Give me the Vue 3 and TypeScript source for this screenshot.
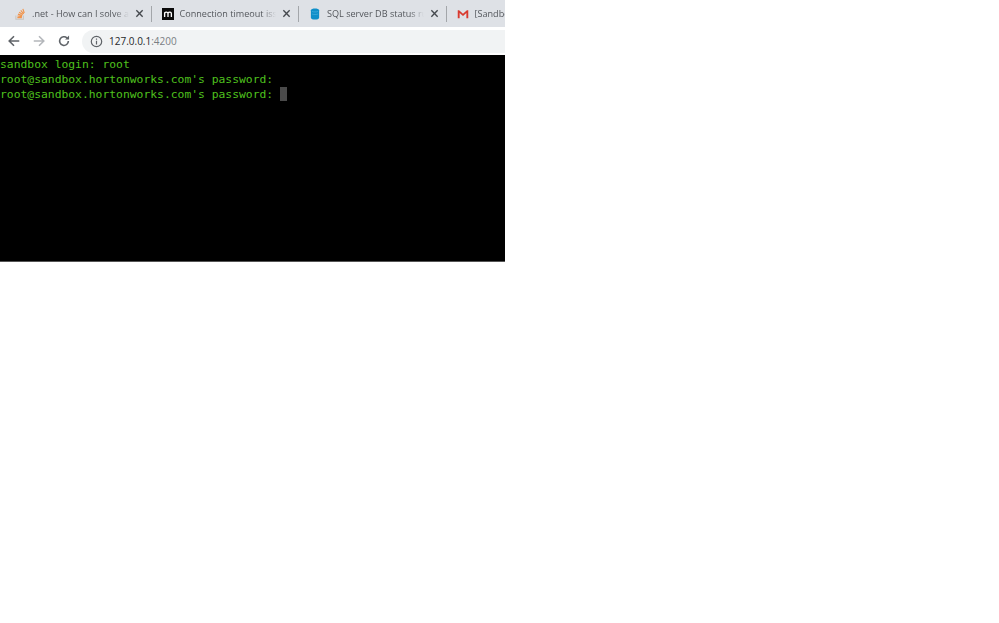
<script setup lang="ts">
interface Tab {
  title: string
  icon: string
}

const tabs: Tab[] = [
  { title: '.net - How can I solve a problem', icon: 'so' },
  { title: 'Connection timeout issue', icon: 'm' },
  { title: 'SQL server DB status running', icon: 'db' },
  { title: '[Sandbox] Gmail', icon: 'gm' },
]

const lines: string[] = [
  'sandbox login: root',
  "root@sandbox.hortonworks.com's password:",
]
</script>

<template>
  <div class="window">
    <div class="tabstrip">
      <div v-for="tab in tabs" :key="tab.icon" class="tab">
        <svg v-if="tab.icon === 'so'" class="favicon" viewBox="0 0 16 16">
          <path d="M2.500 10v5h10v-5" fill="none" stroke="#c9c4bd" stroke-width="1.400" />
          <path d="M4.500 12.800h6M4.600 10.600l6 .9M5.300 8.200l5.700 2M6.800 5.600l5 3.100M9 3.300l3.900 4.500M11.800 1.200l1.900 5.400" fill="none" stroke="#f1934a" stroke-width="1.500" />
        </svg>
        <svg v-else-if="tab.icon === 'm'" class="favicon" viewBox="0 0 16 16">
          <rect width="16" height="16" fill="#0b0b0b" />
          <path d="M3.500 12V5.500M3.500 7c1-2 4-2 4.500 0V12M8 7c1-2 4.500-2 4.500 .5V12" fill="none" stroke="#fff" stroke-width="1.800" />
        </svg>
        <svg v-else-if="tab.icon === 'db'" class="favicon" viewBox="0 0 16 16">
          <path d="M2.500 3c0-3.300 11-3.300 11 0v10c0 3.300-11 3.300-11 0z" fill="#0f8fc9" />
          <path d="M4 4.500c2 1 6 1 8 0M4 8c2 1 6 1 8 0" fill="none" stroke="#59b8e2" stroke-width=".7" />
        </svg>
        <svg v-else class="favicon" viewBox="0 0 16 16">
          <path d="M1 13.500V3h1.800L8 7.500 13.200 3H15v10.500h-2.500V6.800L8 10.500 3.500 6.800v6.700z" fill="#d93a2f" />
        </svg>
        <span class="title">{{ tab.title }}</span>
        <svg class="close" viewBox="0 0 10 10">
          <path d="M1.500 1.500l7 7M8.500 1.500l-7 7" stroke="#45494e" stroke-width="1.500" fill="none" />
        </svg>
      </div>
    </div>

    <div class="toolbar">
      <svg class="nav" viewBox="0 0 16 16">
        <path d="M14 8H3M8 2.500L2.500 8 8 13.500" fill="none" stroke="#5f6368" stroke-width="1.800" />
      </svg>
      <svg class="nav" viewBox="0 0 16 16">
        <path d="M2 8h11M8 2.500L13.500 8 8 13.500" fill="none" stroke="#b4b7bb" stroke-width="1.800" />
      </svg>
      <svg class="nav" viewBox="0 0 16 16">
        <path d="M13 8a5 5 0 1 1-1.500-3.500" fill="none" stroke="#5f6368" stroke-width="1.800" />
        <path d="M13.800 1.800v4.600H9.200z" fill="#5f6368" />
      </svg>
      <div class="omnibox">
        <svg class="info" viewBox="0 0 14 14">
          <circle cx="7" cy="7" r="5.600" fill="none" stroke="#5f6368" stroke-width="1.300" />
          <path d="M7 6.200v4M7 3.700v1.300" stroke="#5f6368" stroke-width="1.300" fill="none" />
        </svg>
        <span class="url">127.0.0.1<span class="port">:4200</span></span>
      </div>
    </div>

    <div class="terminal">
      <div v-for="(line, i) in lines" :key="i" class="line">{{ line }}</div>
      <div class="line">{{ lines[1] }} <span class="cursor"></span></div>
    </div>
  </div>
</template>

<style>
html,
body {
  background: #fff;
}
</style>

<style scoped>
.window {
  width: 505px;
  overflow: hidden;
  display: flex;
  flex-direction: column;
}

.tabstrip {
  height: 27px;
  background: #dee1e6;
  display: flex;
  padding-left: 4px;
  flex-shrink: 0;
  overflow: hidden;
}

.tab {
  flex: 0 0 147.5px;
  min-width: 0;
  height: 27px;
  box-sizing: border-box;
  display: flex;
  align-items: center;
  padding: 0 8px 0 10px;
  position: relative;
}

.tab::after {
  content: "";
  position: absolute;
  right: 0;
  top: 6px;
  height: 16px;
  width: 1px;
  background: #a3a6aa;
}

.favicon {
  width: 12px;
  height: 12px;
  flex-shrink: 0;
  margin-right: 6px;
}

.title {
  flex: 1;
  min-width: 0;
  white-space: nowrap;
  overflow: hidden;
  font: 9.1px/14px "Open Sans", sans-serif;
  color: #54575c;
  -webkit-mask-image: linear-gradient(90deg, #000 85%, transparent);
  mask-image: linear-gradient(90deg, #000 85%, transparent);
}

.close {
  width: 9px;
  height: 9px;
  flex-shrink: 0;
  margin-left: 6px;
}

.toolbar {
  height: 28px;
  background: #fff;
  display: flex;
  align-items: center;
  gap: 11px;
  padding: 0 0 0 7px;
  box-sizing: border-box;
}

.nav {
  width: 14px;
  height: 14px;
  flex-shrink: 0;
}

.omnibox {
  flex: 1;
  height: 23px;
  background: #f1f3f4;
  border-radius: 12px 0 0 12px;
  display: flex;
  align-items: center;
  padding-left: 8px;
  gap: 6px;
}

.info {
  width: 13px;
  height: 13px;
  flex-shrink: 0;
}

.url {
  font: 10px/14px "Open Sans", sans-serif;
  color: #26282b;
}

.port {
  color: #7a7e83;
}

.terminal {
  height: 207px;
  background: #000;
  box-sizing: border-box;
  padding-top: 2px;
  border-bottom: 1px solid #555;
  font: 11.35px/15px "DejaVu Sans Mono", monospace;
  color: #4fc01e;
  white-space: pre;
}

.line {
  height: 15px;
}

.cursor {
  display: inline-block;
  width: 7px;
  height: 14px;
  background: #4a4a4a;
  vertical-align: -3px;
}
</style>
